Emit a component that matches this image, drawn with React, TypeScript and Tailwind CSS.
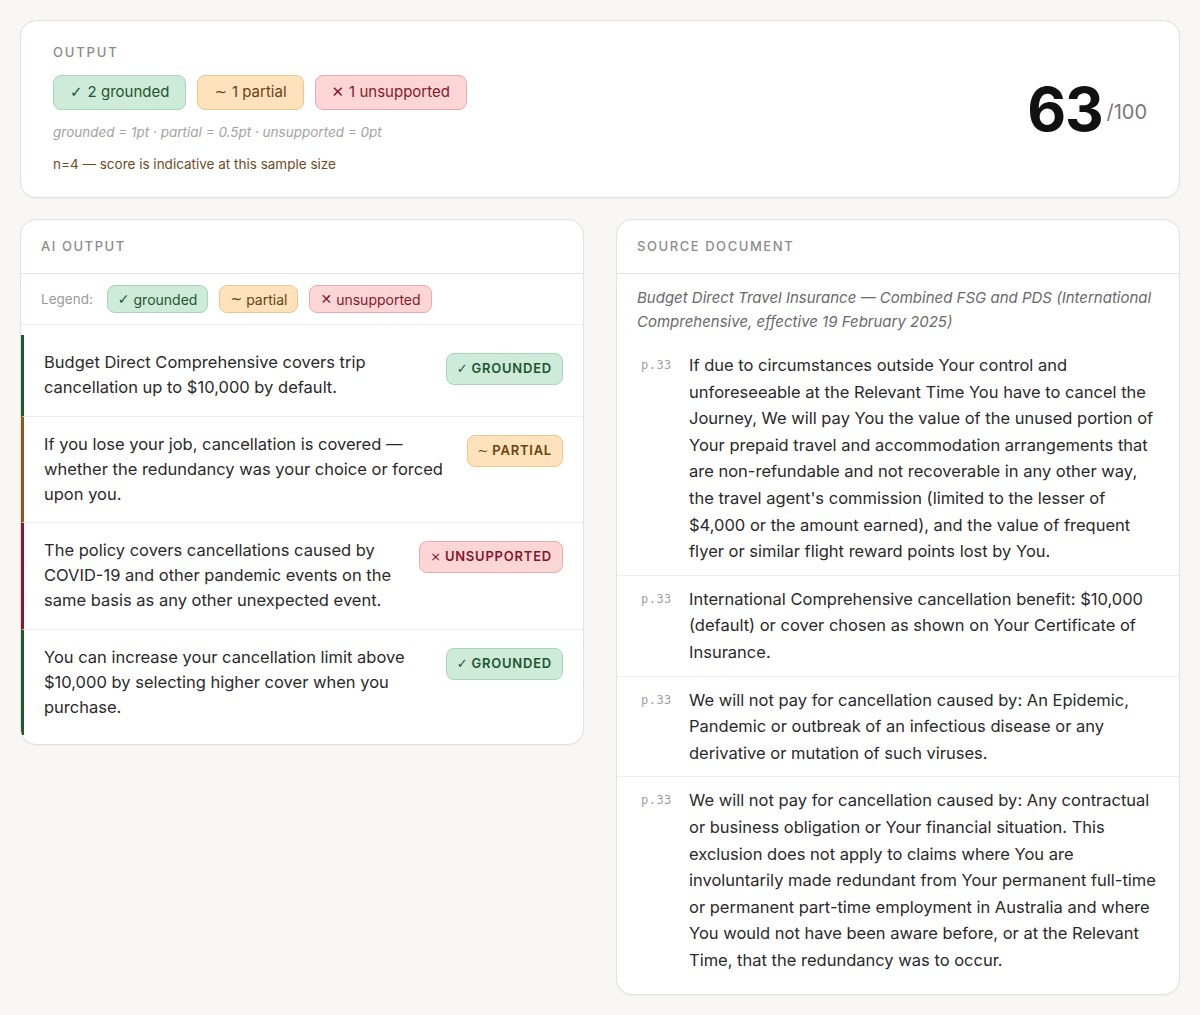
const font = { fontFamily: 'Inter, "Noto Sans", sans-serif' }
const glyph = { fontFamily: '"DejaVu Sans", sans-serif' }

type Verdict = 'grounded' | 'partial' | 'unsupported'

const chipStyles: Record<Verdict, string> = {
  grounded: 'bg-[#cdebd8] border-[#a6d6b6] text-[#1d5531]',
  partial: 'bg-[#fde2bc] border-[#efc58c] text-[#6a4211]',
  unsupported: 'bg-[#fcd6d6] border-[#eeabab] text-[#86162a]',
}

const barStyles: Record<Verdict, string> = {
  grounded: 'border-[#1f5a2e]',
  partial: 'border-[#8a5a1e]',
  unsupported: 'border-[#8a1a2a]',
}

const badgeIcon: Record<Verdict, string> = {
  grounded: '✓',
  partial: '~',
  unsupported: '×',
}

const badgeLabel: Record<Verdict, string> = {
  grounded: 'GROUNDED',
  partial: 'PARTIAL',
  unsupported: 'UNSUPPORTED',
}

const claims: { text: string; verdict: Verdict }[] = [
  { text: 'Budget Direct Comprehensive covers trip cancellation up to $10,000 by default.', verdict: 'grounded' },
  { text: 'If you lose your job, cancellation is covered — whether the redundancy was your choice or forced upon you.', verdict: 'partial' },
  { text: 'The policy covers cancellations caused by COVID-19 and other pandemic events on the same basis as any other unexpected event.', verdict: 'unsupported' },
  { text: 'You can increase your cancellation limit above $10,000 by selecting higher cover when you purchase.', verdict: 'grounded' },
]

const passages = [
  "If due to circumstances outside Your control and unforeseeable at the Relevant Time You have to cancel the Journey, We will pay You the value of the unused portion of Your prepaid travel and accommodation arrangements that are non-refundable and not recoverable in any other way, the travel agent's commission (limited to the lesser of $4,000 or the amount earned), and the value of frequent flyer or similar flight reward points lost by You.",
  'International Comprehensive cancellation benefit: $10,000 (default) or cover chosen as shown on Your Certificate of Insurance.',
  'We will not pay for cancellation caused by: An Epidemic, Pandemic or outbreak of an infectious disease or any derivative or mutation of such viruses.',
  'We will not pay for cancellation caused by: Any contractual or business obligation or Your financial situation. This exclusion does not apply to claims where You are involuntarily made redundant from Your permanent full-time or permanent part-time employment in Australia and where You would not have been aware before, or at the Relevant Time, that the redundancy was to occur.',
]

function Chip({ verdict, icon, children, small }: { verdict: Verdict; icon: string; children: React.ReactNode; small?: boolean }) {
  return (
    <span
      className={`inline-flex items-center border rounded-lg ${chipStyles[verdict]} ${
        small ? 'gap-[4px] h-[28px] px-[10px] text-[14px]' : 'gap-[5px] h-[35px] px-4 text-[15px]'
      }`}
    >
      <span style={glyph}>{icon}</span>
      {children}
    </span>
  )
}

export default function App() {
  return (
    <div style={font} className="min-h-[1015px] bg-[#f8f7f3] p-5 text-[#1f1f1f]">
      {/* Summary */}
      <div className="bg-white border border-[#e3e1dc] rounded-2xl pl-8 pr-8 pt-[22px] pb-[23px] flex justify-between items-center shadow-[0_1px_2px_rgba(0,0,0,0.04)]">
        <div>
          <div className="text-[13px] tracking-[0.14em] text-[#8b8b8b] font-medium">OUTPUT</div>
          <div className="flex gap-[11px] mt-[12px]">
            <Chip verdict="grounded" icon="✓">2 grounded</Chip>
            <Chip verdict="partial" icon="~">1 partial</Chip>
            <Chip verdict="unsupported" icon="✕">1 unsupported</Chip>
          </div>
          <div className="mt-[12px] text-[13.5px] italic text-[#a3a3a3]">
            grounded = 1pt · partial = 0.5pt · unsupported = 0pt
          </div>
          <div className="mt-[12px] text-[13.5px] text-[#6e4a1c]">n=4 — score is indicative at this sample size</div>
        </div>
        <div className="flex items-center">
          <span className="text-[60px] font-bold leading-none tracking-[-0.02em] text-[#111]">63</span>
          <span className="text-[20px] text-[#777] ml-1 mt-[6px]">/100</span>
        </div>
      </div>

      <div className="grid grid-cols-2 gap-8 mt-[21px] items-start">
        {/* AI output */}
        <div className="bg-white border border-[#e3e1dc] rounded-2xl overflow-hidden shadow-[0_1px_2px_rgba(0,0,0,0.04)]">
          <div className="px-5 h-[54px] flex items-center border-b border-[#e6e4df]">
            <span className="text-[13px] tracking-[0.12em] text-[#8b8b8b] font-medium">AI OUTPUT</span>
          </div>
          <div className="px-5 h-[51px] flex items-center gap-[11px] border-b border-[#efeeea]">
            <span className="text-[13.5px] text-[#9a9a9a] mr-[3px]">Legend:</span>
            <Chip verdict="grounded" icon="✓" small>grounded</Chip>
            <Chip verdict="partial" icon="~" small>partial</Chip>
            <Chip verdict="unsupported" icon="✕" small>unsupported</Chip>
          </div>
          <div className="pt-[10px] pb-[9px]">
            {claims.map((c, i) => (
              <div
                key={i}
                className={`flex gap-5 items-start border-l-[3px] ${barStyles[c.verdict]} pl-5 pr-5 pt-[15px] pb-[15.5px] ${
                  i < claims.length - 1 ? 'border-b border-b-[#efeeea]' : ''
                }`}
              >
                <p className="flex-1 text-[16.5px] leading-[25px] text-[#2a2a2a]">{c.text}</p>
                <span
                  className={`mt-[3px] shrink-0 inline-flex items-center gap-[3px] h-[32px] px-[10px] border rounded-lg text-[13px] font-semibold tracking-[0.06em] ${chipStyles[c.verdict]}`}
                >
                  <span style={glyph} className="font-normal">{badgeIcon[c.verdict]}</span>
                  {badgeLabel[c.verdict]}
                </span>
              </div>
            ))}
          </div>
        </div>

        {/* Source */}
        <div className="bg-white border border-[#e3e1dc] rounded-2xl overflow-hidden shadow-[0_1px_2px_rgba(0,0,0,0.04)]">
          <div className="px-5 h-[54px] flex items-center border-b border-[#e6e4df]">
            <span className="text-[13px] tracking-[0.12em] text-[#8b8b8b] font-medium">SOURCE DOCUMENT</span>
          </div>
          <div className="px-5 pt-[12px] pb-[8px] text-[15px] leading-[24px] italic text-[#6a6a6a]">
            Budget Direct Travel Insurance — Combined FSG and PDS (International Comprehensive, effective 19 February 2025)
          </div>
          <div className="pb-[11px]">
            {passages.map((p, i) => (
              <div
                key={i}
                className={`flex gap-3 pl-6 pr-5 pt-[10px] pb-[10px] ${i < passages.length - 1 ? 'border-b border-[#efeeea]' : ''}`}
              >
                <span
                  className="w-[36px] shrink-0 text-[12px] leading-[26.6px] text-[#a0a0a0] tracking-[0.04em]"
                  style={{ fontFamily: '"DejaVu Sans Mono", monospace' }}
                >
                  p.33
                </span>
                <p className="flex-1 text-[16.5px] leading-[26.6px] text-[#2a2a2a]">{p}</p>
              </div>
            ))}
          </div>
        </div>
      </div>
    </div>
  )
}
